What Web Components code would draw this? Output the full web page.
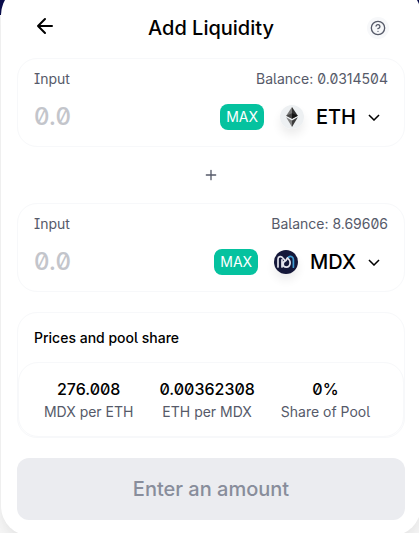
<!DOCTYPE html>
<html lang="en">
<head>
<meta charset="utf-8">
<title>Add Liquidity</title>
<style>
html, body { margin: 0; min-height: 100%; }
html { background: linear-gradient(#0b0f4d 0 15px, #f7f7f7 15px) no-repeat #f7f7f7; }
body { font-family: Inter, "Liberation Sans", sans-serif; font-feature-settings: "ss02" 1; color: #000; overflow: hidden; }
</style>
</head>
<body>
<liquidity-card>
  <card-header></card-header>
  <currency-input balance="0.0314504" symbol="ETH"><eth-logo></eth-logo></currency-input>
  <plus-divider></plus-divider>
  <currency-input balance="8.69606" symbol="MDX"><mdx-logo></mdx-logo></currency-input>
  <pool-prices>
    <price-item value="276.008">MDX per ETH</price-item>
    <price-item value="0.00362308">ETH per MDX</price-item>
    <price-item value="0%">Share of Pool</price-item>
  </pool-prices>
  <submit-button>Enter an amount</submit-button>
</liquidity-card>
<script>
function define(name, template) {
  customElements.define(name, class extends HTMLElement {
    constructor() {
      super();
      const t = document.createElement('template');
      t.innerHTML = typeof template === 'function' ? template(this) : template;
      this.attachShadow({ mode: 'open' }).append(t.content.cloneNode(true));
    }
  });
}

define('liquidity-card', `
<style>
:host { display: flex; flex-direction: column; box-sizing: border-box; margin: -15px -2px 0 1px; padding: 16px; background: #fff; border-radius: 30px; box-shadow: 0 4px 8px rgba(0,0,0,.04), 0 16px 24px rgba(0,0,0,.04); }
</style><slot></slot>`);

define('card-header', `
<style>
:host { display: flex; justify-content: space-between; align-items: center; height: 53px; padding: 0 14px 4px 16px; }
h1 { margin: 0; font-size: 20px; line-height: 24px; font-weight: 500; }
a { display: flex; padding-bottom: 4px; color: #000; }
button { display: flex; align-items: center; justify-content: center; width: 26px; height: 26px; padding: 2px; border: 0; border-radius: 50%; background: #f7f8fa content-box; color: #565a69; }
</style>
<a href="#pool" aria-label="Back"><svg width="24" height="24" viewBox="0 0 24 24" fill="none" stroke="currentColor" stroke-width="2" stroke-linecap="round" stroke-linejoin="round"><path d="M19 12H5M12 19l-7-7 7-7"/></svg></a>
<h1>Add Liquidity</h1>
<button type="button" aria-label="Help"><svg width="16" height="16" viewBox="0 0 24 24" fill="none" stroke="currentColor" stroke-width="2" stroke-linecap="round" stroke-linejoin="round"><circle cx="12" cy="12" r="10"/><path d="M9.09 9a3 3 0 0 1 5.83 1c0 2-3 3-3 3M12 17h.01"/></svg></button>`);

define('currency-input', el => `
<style>
:host { display: block; border: 1px solid #f7f8fa; border-radius: 20px; background: #fff; }
.top { display: flex; justify-content: space-between; padding: 11px 16px 0; font-size: 14px; line-height: 17px; color: #565a69; }
.row { display: flex; align-items: center; padding: 13px 16px 12px; }
input { flex: 1; min-width: 0; width: 0; padding: 0; border: 0; outline: 0; background: none; font: 500 24px/34px Inter, "Liberation Sans", sans-serif; font-feature-settings: inherit; height: 34px; }
input::placeholder { color: #c3c5cb; opacity: 1; }
button { font: inherit; font-feature-settings: inherit; border: 0; }
.max { height: 26px; padding: 0 6px 2px; margin-right: 8px; border-radius: 8px; background: #05c29f; color: #fff; font-size: 14px; font-weight: 400; }
.token { display: flex; align-items: center; height: 34px; padding: 0 8px; background: none; color: #000; font-size: 20px; font-weight: 500; }
.symbol { margin: 0 12px; }
</style>
<div class="top"><label for="amount">Input</label><span>Balance: ${el.getAttribute('balance')}</span></div>
<div class="row"><input id="amount" type="text" inputmode="decimal" placeholder="0.0">
<button class="max" type="button">MAX</button>
<button class="token" type="button"><slot></slot><span class="symbol">${el.getAttribute('symbol')}</span><svg width="12" height="7" viewBox="0 0 12 7" fill="none" stroke="currentColor" stroke-width="1.5"><path d="M.97 1 6 6l5.03-5"/></svg></button></div>`);

const logoStyle = `<style>:host { display: block; width: 24px; height: 24px; border-radius: 50%; box-shadow: 0 6px 10px rgba(0,0,0,.075); } svg { display: block; }</style>`;
define('eth-logo', logoStyle + `
<svg width="24" height="24" viewBox="0 0 24 24"><circle cx="12" cy="12" r="12" fill="#edf0f2"/><path d="M12 2v11.8l-5.8-3.1z" fill="#777"/><path d="M12 2v11.8l5.8-3.1z" fill="#303030"/><path d="m6.2 12.2 5.8 3.3V22z" fill="#808080"/><path d="m17.8 12.2-5.8 3.3V22z" fill="#3c3c3c"/><path d="m6.2 10.7 5.8-2.5v5.6z" fill="#444"/><path d="m17.8 10.7-5.8-2.5v5.6z" fill="#141414"/></svg>`);
define('mdx-logo', logoStyle + `
<svg width="24" height="24" viewBox="0 0 24 24" fill="none" stroke-width="1.7" stroke-linecap="round" stroke-linejoin="round"><circle cx="12" cy="12" r="12" fill="#15183a"/><path d="M14.4 7.2c2.4-1.8 5-.4 5 2.4v7.6" stroke="#3e9bd3"/><path d="M4 17V9c0-2.6 3.4-3.2 4.8-1l1.6 1.8M8 17V9.8M12 10.4l1.4-2.6c2 1.6 2.9 3.4 2.7 5.4-.2 2.4-1.8 4-3.8 4-2.2 0-3.2-1.6-3.2-3.2 0-1.8 1.2-2.9 2.9-3.6" stroke="#e4e5ee"/></svg>`);

define('plus-divider', `
<style>:host { display: flex; justify-content: center; align-items: center; height: 56px; color: #565a69; }</style>
<svg width="16" height="16" viewBox="0 0 24 24" fill="none" stroke="currentColor" stroke-width="2" stroke-linecap="round"><path d="M12 5v14M5 12h14"/></svg>`);

define('pool-prices', `
<style>
:host { display: block; margin-top: 20px; border: 1px solid #f7f8fa; border-radius: 20px; }
h2 { margin: 0; padding: 16px; font-size: 14px; line-height: 17px; font-weight: 500; }
.items { display: flex; justify-content: center; gap: 26px; border: 1px solid #f7f8fa; border-radius: 20px; padding: 16px 24px 16px 16px; }
</style>
<h2>Prices and pool share</h2><div class="items"><slot></slot></div>`);

define('price-item', el => `
<style>
:host { display: flex; flex-direction: column; align-items: center; gap: 4px; }
.value { font-size: 16px; line-height: 20px; font-weight: 500; }
.label { font-size: 14px; line-height: 17px; font-weight: 400; color: #565a69; }
</style>
<span class="value">${el.getAttribute('value')}</span><span class="label"><slot></slot></span>`);

define('submit-button', `
<style>
:host { display: block; margin-top: 20px; }
button { width: 100%; height: 62px; border: 0; border-radius: 12px; background: #ebecf0; color: #888d9b; font: 500 20px/24px Inter, "Liberation Sans", sans-serif; font-feature-settings: inherit; }
</style>
<button type="button" disabled><slot></slot></button>`);
</script>
</body>
</html>
